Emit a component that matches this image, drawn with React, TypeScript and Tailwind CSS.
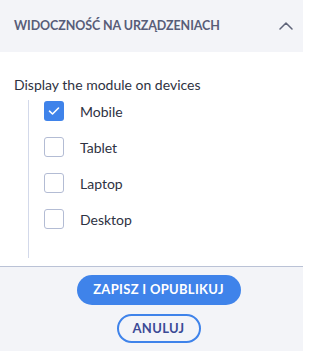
import { useState } from "react";

const devices = ["Mobile", "Tablet", "Laptop", "Desktop"];

function Check({ on }: { on: boolean }) {
  if (on) {
    return (
      <span className="flex h-5 w-5 items-center justify-center rounded-[3px] bg-[#3f83ea]">
        <svg width="12" height="10" viewBox="0 0 12 10" fill="none">
          <path d="M1.5 5.2 4.5 8 10.5 2" stroke="white" strokeWidth="1.6" strokeLinecap="round" strokeLinejoin="round" />
        </svg>
      </span>
    );
  }
  return <span className="h-5 w-5 rounded-[3px] border border-[#b3bcd4] bg-white" />;
}

export default function App() {
  const [checked, setChecked] = useState<Record<string, boolean>>({ Mobile: true });

  return (
    <div className="flex h-[351px] w-[303px] flex-col bg-white font-['Lato',sans-serif] text-[#2e3242]">
      <div className="flex h-[52px] items-center justify-between bg-[#f3f4f8] pl-[14px] pr-[10px]">
        <span className="text-[12.5px] font-bold tracking-[-0.1px] text-[#585d78]">WIDOCZNOŚĆ NA URZĄDZENIACH</span>
        <svg width="14" height="8" viewBox="0 0 14 8" fill="none">
          <path d="M1 7 7 1l6 6" stroke="#5f6479" strokeWidth="1.5" strokeLinecap="round" strokeLinejoin="round" />
        </svg>
      </div>

      <div className="flex-1 px-[14px] pt-[24px]">
        <p className="text-[14px] leading-[18px]">Display the module on devices</p>
        <div className="ml-[14px] mt-[6px] flex h-[158px] flex-col gap-[16px] border-l border-[#d3d9ea] pl-[15px] pt-[1px]">
          {devices.map((d) => (
            <label
              key={d}
              className="flex h-5 cursor-pointer items-center gap-[16px] text-[14px]"
              onClick={() => setChecked((c) => ({ ...c, [d]: !c[d] }))}
            >
              <Check on={!!checked[d]} />
              <span>{d}</span>
            </label>
          ))}
        </div>
      </div>

      <div className="flex h-[85px] flex-col items-center gap-[9px] border-t border-[#bac2d6] bg-[#f3f4f8] pl-[14px] pt-[8px]">
        <button className="h-[30px] w-[164px] rounded-full bg-[#3f83ea] text-[13px] font-bold tracking-[0.3px] text-white">
          ZAPISZ I OPUBLIKUJ
        </button>
        <button className="h-[29px] w-[84px] rounded-full border-2 border-[#3f83ea] bg-transparent text-[13px] font-bold tracking-[0.3px] text-[#3b4a96]">
          ANULUJ
        </button>
      </div>
    </div>
  );
}
